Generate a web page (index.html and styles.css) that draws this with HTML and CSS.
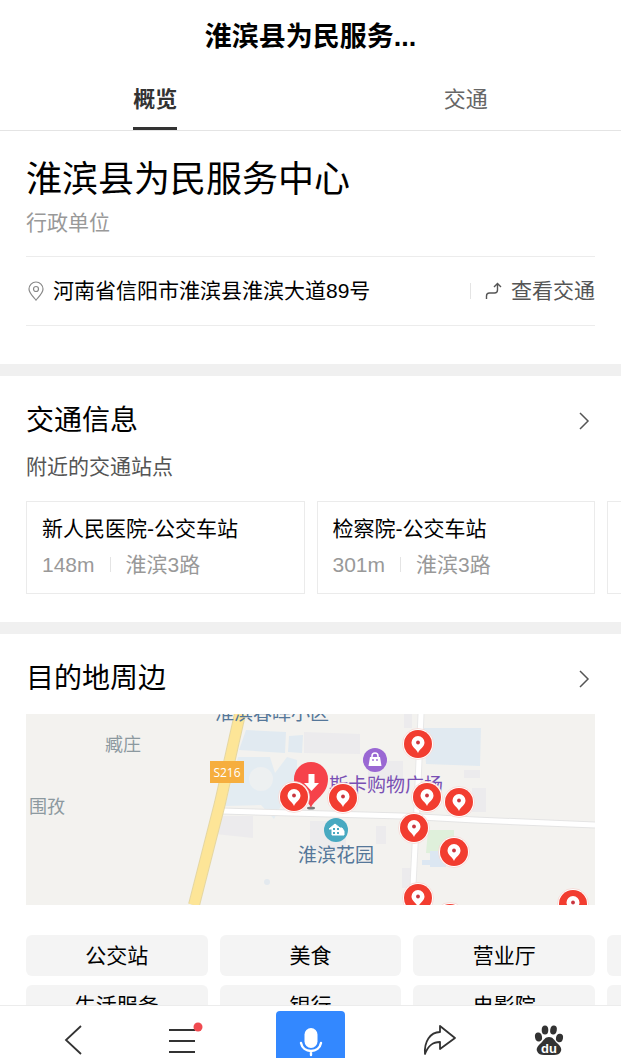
FILE: index.html
```html
<!DOCTYPE html>
<html lang="zh-CN">
<head>
    <meta charset="UTF-8">
    <meta name="viewport" content="width=device-width, initial-scale=1.0">
    <title>淮滨县为民服务中心</title>
    <link rel="stylesheet" href="styles.css">
</head>
<body>
    <header class="header">
        <div class="header-title">淮滨县为民服务...</div>
        <nav class="tabs">
            <a class="tab active" href="#overview">概览</a>
            <a class="tab" href="#traffic">交通</a>
        </nav>
    </header>

    <main>
        <section class="section intro" id="overview">
            <h1>淮滨县为民服务中心</h1>
            <p class="category">行政单位</p>
            <div class="address-row">
                <svg class="icon-pin" viewBox="0 0 16 20" fill="none" stroke="#888" stroke-width="1.2">
                    <path d="M8 19C5 15.500 1 12 1 8a7 7 0 0 1 14 0c0 4-4 7.500-7 11z"/>
                    <circle cx="8" cy="8" r="2.500"/>
                </svg>
                <span class="address">河南省信阳市淮滨县淮滨大道89号</span>
                <a class="route" href="#traffic">
                    <svg class="icon-route" viewBox="0 0 16 18" fill="none" stroke="#555" stroke-width="1.400">
                        <path d="M1 17v-3c0-2 1-3 3-3h5c2 0 3-1 3-3V2M8.500 5L12 1.500 15.500 5"/>
                    </svg>
                    查看交通
                </a>
            </div>
        </section>

        <!-- 交通信息 -->
        <section class="section" id="traffic">
            <div class="section-head">
                <h2>交通信息</h2>
                <a href="#traffic" aria-label="更多交通信息">
                    <svg class="icon-more" viewBox="0 0 12 18" fill="none" stroke="#555" stroke-width="1.500"><path d="M2 1l8 8-8 8"/></svg>
                </a>
            </div>
            <p class="section-sub">附近的交通站点</p>
            <div class="stations">
                <div class="station">
                    <h3>新人民医院-公交车站</h3>
                    <p><span class="distance">148m</span><span>淮滨3路</span></p>
                </div>
                <div class="station">
                    <h3>检察院-公交车站</h3>
                    <p><span class="distance">301m</span><span>淮滨3路</span></p>
                </div>
                <div class="station"></div>
            </div>
        </section>

        <!-- 目的地周边 -->
        <section class="section around">
            <div class="section-head">
                <h2>目的地周边</h2>
                <a href="#around" aria-label="更多周边">
                    <svg class="icon-more" viewBox="0 0 12 18" fill="none" stroke="#555" stroke-width="1.500"><path d="M2 1l8 8-8 8"/></svg>
                </a>
            </div>
            <svg class="map" id="around" viewBox="0 0 569 191" role="img" aria-label="周边地图">
                <defs>
                    <g id="poi">
                        <circle r="15.500" fill="#fff" stroke="#f3c9c4" stroke-width=".6"/>
                        <circle r="14" fill="#f23d30"/>
                        <path d="M0 9C-1.500 5-6.500 3-6.500-1.500a6.500 6.500 0 0 1 13 0C6.500 3 1.500 5 0 9z" fill="#fff"/>
                        <circle cy="-1.500" r="1.900" fill="#c9353f"/>
                    </g>
                </defs>
                <rect width="569" height="191" fill="#f3f2ef"/>
                <!-- 街区 -->
                <path d="M220 16l40 2-1 21-46-3zM263 22l14-1-1 18-14-1zM398 14h57l-1 38-54-2z" fill="#e1eaf1"/>
                <path d="M212 43h32l5 16 12-16 10 3v12l8 14v17l-22-1-9 17-13-14-36 1z" fill="#e3ecf2"/>
                <circle cx="235" cy="65" r="12" fill="#edf0f1"/>
                <path d="M278 18l56 2v20l-56-1zM342 47h35v20h-35zM194 102h33v22l-38-4zM284 107h36v31l-36-1zM438 56h16v8h-16zM446 74h14v24h-14zM376 154h10v20h-10zM378 0h8v14h-8zM350 112h10v18h-10z" fill="#ecebed"/>
                <path d="M402 116h26v24l-28-1z" fill="#dff0db"/>
                <path d="M404 137h16v16h-16zM396 146h8v5h-8z" fill="#dce7f2"/>
                <circle cx="241" cy="168" r="3" fill="#e3e9ee"/>
                <!-- 道路 -->
                <path d="M395 0l-4 93-5 98" fill="none" stroke="#e8e8e8" stroke-width="7"/>
                <path d="M196 97l180 5 73 4 120 5" fill="none" stroke="#e4e4e4" stroke-width="7"/>
                <path d="M395 0l-4 93-5 98" fill="none" stroke="#fff" stroke-width="5"/>
                <path d="M196 97l180 5 73 4 120 5" fill="none" stroke="#fff" stroke-width="5"/>
                <path d="M214 0l-20 89-26 102" fill="none" stroke="#e5d7a3" stroke-width="12"/>
                <path d="M214 0l-20 89-26 102" fill="none" stroke="#fde597" stroke-width="10"/>
                <rect x="184" y="47" width="34" height="22" fill="#f6ae3e"/>
                <text class="map-road" x="201" y="63">S216</text>
                <!-- 地名 -->
                <text class="map-village" x="97" y="37">臧庄</text>
                <text class="map-village" x="21" y="99">围孜</text>
                <text class="map-place" x="246" y="6">淮滨春晖小区</text>
                <text class="map-place" x="310" y="148">淮滨花园</text>
                <text class="map-place mall" x="360" y="78">斯卡购物广场</text>
                <!-- 商场 -->
                <circle cx="349" cy="46" r="12" fill="#9a68d3"/>
                <path d="M344 43h10l1.500 9h-13z" fill="#fff"/>
                <path d="M346 44v-2a3 3 0 0 1 6 0v2" fill="none" stroke="#fff" stroke-width="1.500"/>
                <circle cx="347" cy="46" r=".9" fill="#9a68d3"/>
                <circle cx="351" cy="46" r=".9" fill="#9a68d3"/>
                <!-- 小区 -->
                <circle cx="310" cy="116" r="12" fill="#48a9c1"/>
                <path d="M303 115l6-5 5 4h2l2 3v4h-12v-6z" fill="#fff" stroke="#fff" stroke-linejoin="round"/>
                <path d="M307 114h2v2h-2zM311 114h2v2h-2zM307 118h2v2h-2zM311 118h2v2h-2z" fill="#48a9c1"/>
                <!-- 目的地 -->
                <ellipse cx="285" cy="94" rx="4" ry="1.500" fill="#777"/>
                <path d="M285 94c-2-8-17-13-17-29a17 17 0 0 1 34 0c0 16-15 21-17 29z" fill="#f6424a"/>
                <path d="M282.500 60h6v9h4.500l-7.500 8-7.500-8h4.500z" fill="#fff"/>
                <use href="#poi" x="268" y="83"/>
                <use href="#poi" x="317" y="84"/>
                <use href="#poi" x="392" y="30"/>
                <use href="#poi" x="401" y="83"/>
                <use href="#poi" x="433" y="88"/>
                <use href="#poi" x="388" y="114"/>
                <use href="#poi" x="428" y="138"/>
                <use href="#poi" x="392" y="184"/>
                <use href="#poi" x="424" y="204"/>
                <use href="#poi" x="547" y="190"/>
            </svg>
            <div class="chips">
                <button class="chip" type="button">公交站</button>
                <button class="chip" type="button">生活服务</button>
                <button class="chip" type="button">美食</button>
                <button class="chip" type="button">银行</button>
                <button class="chip" type="button">营业厅</button>
                <button class="chip" type="button">电影院</button>
                <button class="chip" type="button" aria-label="更多"></button>
                <button class="chip" type="button" aria-label="更多"></button>
            </div>
        </section>
    </main>

    <!-- 底部工具栏 -->
    <footer class="toolbar">
        <div class="tool-group">
            <button class="tool" type="button" aria-label="返回">
                <svg width="18" height="30" viewBox="0 0 18 30" fill="none" stroke="#333" stroke-width="1.800"><path d="M17 1L2 15l15 14"/></svg>
            </button>
            <button class="tool" type="button" aria-label="菜单">
                <svg width="42" height="36" viewBox="0 0 42 36">
                    <path d="M8 8h26M8 19h26M8 30h26" stroke="#333" stroke-width="2"/>
                    <circle cx="37" cy="5" r="4.500" fill="#f04a50"/>
                </svg>
            </button>
        </div>
        <button class="tool voice" type="button" aria-label="语音">
            <svg width="30" height="32" viewBox="0 0 30 32">
                <rect x="8.500" y="2" width="13" height="20" rx="6.500" fill="#fff"/>
                <path d="M5 17c1 5 5 8 10 8s9-3 10-8M15 25v4" fill="none" stroke="#fff" stroke-width="2.400" stroke-linecap="round"/>
            </svg>
        </button>
        <div class="tool-group">
            <button class="tool" type="button" aria-label="分享">
                <svg width="34" height="32" viewBox="0 0 34 32" fill="none" stroke="#333" stroke-width="1.800" stroke-linejoin="round"><path d="M17 2l15 12-15 11v-7C9 18 5 22 2 30 1 18 7 8 17 8z"/></svg>
            </button>
            <button class="tool" type="button" aria-label="百度首页">
                <svg width="30" height="32" viewBox="0 0 30 32" fill="#333">
                    <ellipse cx="4.500" cy="13" rx="3.500" ry="4.500" transform="rotate(-12 4.500 13)"/>
                    <ellipse cx="11" cy="6" rx="3.300" ry="4.500"/>
                    <ellipse cx="19.500" cy="6" rx="3.300" ry="4.500" transform="rotate(10 19.500 6)"/>
                    <ellipse cx="25.500" cy="14" rx="3.500" ry="4.300" transform="rotate(12 25.500 14)"/>
                    <path d="M15 13c4 0 5 3 8 6s5 5 4 8-4 4-7 4H10c-3 0-6-1-7-4s1-5 4-8c3-3 4-6 8-6z"/>
                    <text class="logo-text" x="15" y="29">du</text>
                </svg>
            </button>
        </div>
    </footer>
</body>
</html>
```
FILE: styles.css
```css
* {
    box-sizing: border-box;
}
body {
    margin: 0;
    height: 100vh;
    overflow: hidden;
    background: #fff;
    color: #000;
    font-family: "Liberation Sans", "Noto Sans CJK SC", sans-serif;
    font-size: 21px;
    line-height: 32px;
}
h1, h2, h3, p {
    margin: 0;
    font-weight: 400;
}
a {
    color: inherit;
    text-decoration: none;
}
button {
    padding: 0;
    border: none;
    background: none;
    color: inherit;
    font: inherit;
    cursor: pointer;
}
svg {
    display: block;
    flex-shrink: 0;
}

/* 顶部 */
.header {
    padding-top: 21px;
    border-bottom: 1px solid #e4e4e4;
}
.header-title {
    text-align: center;
    font-size: 27px;
    font-weight: 700;
}
.tabs {
    display: flex;
    justify-content: space-around;
    margin-top: 31px;
}
.tab {
    height: 46px;
    font-size: 22px;
    color: #666;
}
.tab.active {
    border-bottom: 3px solid #333;
    color: #333;
    font-weight: 700;
}

/* 内容区块 */
.section {
    padding: 29px 26px 28px;
    border-bottom: 12px solid #f0f0f0;
}
.intro {
    padding: 25px 26px 38px;
}
.intro h1 {
    font-size: 36px;
    line-height: 48px;
}
.category {
    margin-top: 3px;
    color: #999;
}
.address-row {
    display: flex;
    align-items: center;
    height: 70px;
    margin-top: 17px;
    border-top: 1px solid #ececec;
    border-bottom: 1px solid #ececec;
}
.icon-pin {
    width: 20px;
    height: 20px;
    margin-right: 7px;
}
.address {
    flex: 1;
}
.route {
    display: flex;
    align-items: center;
    color: #555;
}
.route::before {
    content: "";
    width: 1px;
    height: 16px;
    margin-right: 14px;
    background: #e4e4e4;
}
.icon-route {
    width: 17px;
    height: 18px;
    margin-right: 9px;
}
.section-head {
    display: flex;
    align-items: center;
    justify-content: space-between;
}
.section-head h2 {
    font-size: 28px;
}
.icon-more {
    width: 12px;
    height: 18px;
    margin-right: 5px;
}
.section-sub {
    margin-top: 14px;
    color: #555;
}

/* 站点卡片 */
.stations {
    display: grid;
    grid-auto-flow: column;
    grid-auto-columns: calc((100% - 38px) / 2);
    gap: 12px;
    margin: 18px -26px 0 0;
    overflow-x: auto;
    scrollbar-width: none;
}
.station {
    height: 93px;
    padding: 11px 15px;
    border: 1px solid #ebebeb;
}
.station h3 {
    font-size: 21px;
}
.station p {
    display: flex;
    align-items: center;
    margin-top: 4px;
    color: #999;
}
.distance::after {
    content: "";
    display: inline-block;
    width: 1px;
    height: 15px;
    margin: 0 15px;
    background: #e4e4e4;
}

/* 地图 */
.map {
    width: 100%;
    height: auto;
    margin-top: 19px;
}
.map text {
    text-anchor: middle;
}
.map-village {
    fill: #8c999f;
    font-size: 18px;
}
.map-place {
    fill: #557799;
    font-size: 19px;
}
.map-place.mall {
    fill: #7950b4;
}
.map-road {
    fill: #fff;
    font-family: "Open Sans", sans-serif;
    font-size: 12px;
}
.chips {
    display: grid;
    grid-template-rows: 41px 41px;
    grid-auto-flow: column;
    grid-auto-columns: calc((100% - 50px) / 3);
    gap: 9px 12px;
    margin: 30px -26px 0 0;
    overflow-x: auto;
    scrollbar-width: none;
}
.chip {
    border-radius: 6px;
    background: #f4f4f4;
}

/* 底部工具栏 */
.toolbar {
    position: fixed;
    right: 0;
    bottom: 0;
    left: 0;
    display: flex;
    align-items: flex-end;
    justify-content: space-between;
    height: 53px;
    padding: 0 38px;
    border-top: 1px solid #ececec;
    background: #fff;
}
.tool-group {
    display: flex;
    gap: 40px;
}
.tool {
    display: flex;
    align-items: center;
    justify-content: center;
    width: 69px;
    height: 36px;
}
.tool.voice {
    align-items: flex-end;
    height: 47px;
    border-radius: 4px 4px 0 0;
    background: #3388ff;
}
.logo-text {
    fill: #fff;
    font-size: 13px;
    font-weight: 700;
    text-anchor: middle;
}
```
